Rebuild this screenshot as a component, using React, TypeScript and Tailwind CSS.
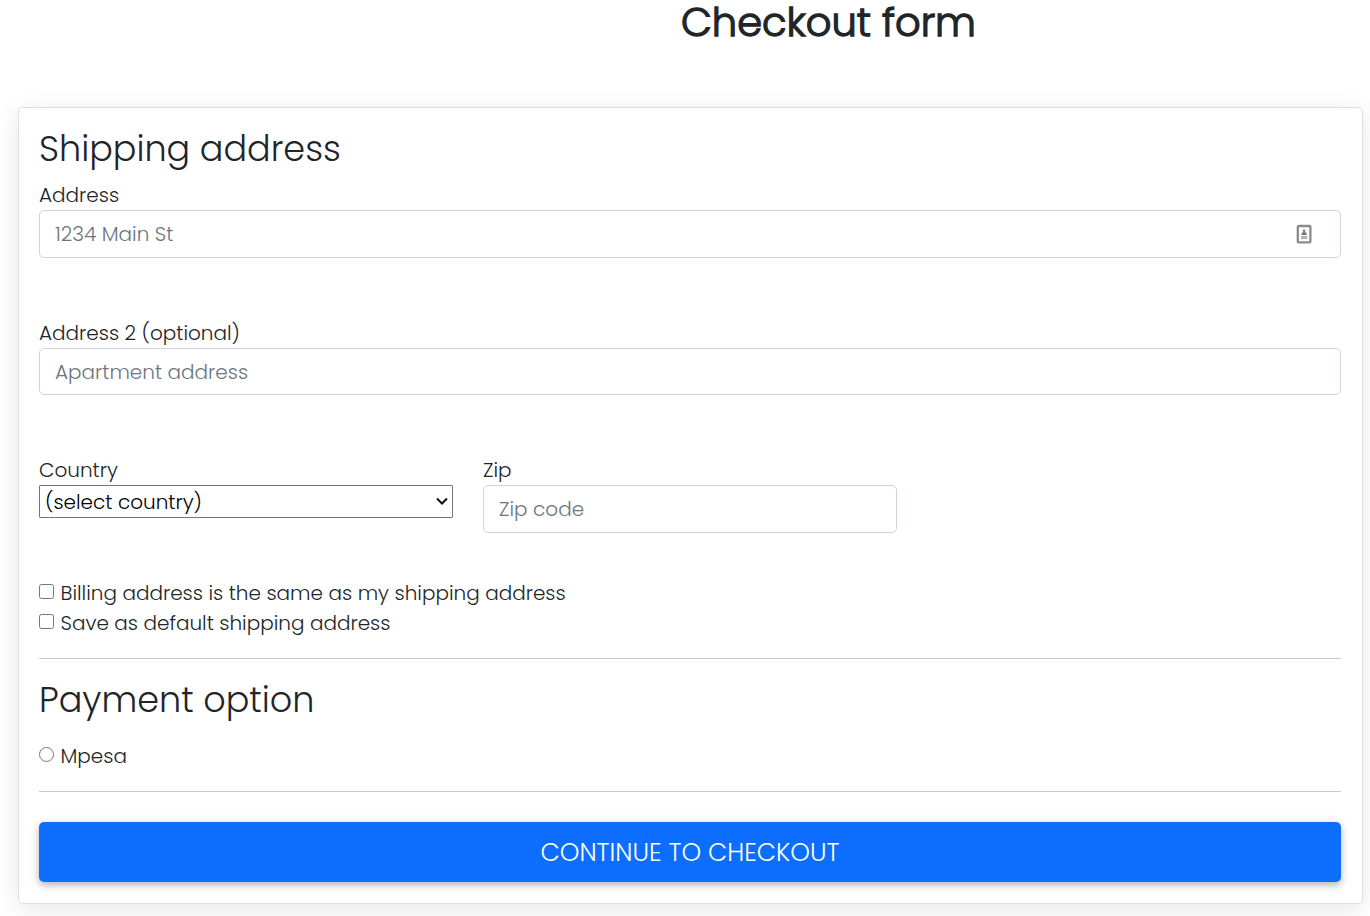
import React from "react";

const inputClass =
  "block h-12 w-full rounded-[5px] border border-[#ced4da] bg-white px-[15px] text-[20px] font-light text-[#495057] outline-none placeholder:text-[#6c757d] placeholder:opacity-100";

const ContactCardIcon = () => (
  <svg className="pointer-events-none absolute right-[29px] top-[14px] h-5 w-4" viewBox="0 0 16 20" fill="none">
    <rect x="1.8" y="2" width="12.6" height="16.4" rx="1" stroke="#8b8b8b" strokeWidth="2.3" />
    <circle cx="8.1" cy="6.8" r="1.3" fill="#777" />
    <path d="M5.4 10.9c0-2.1 1-2.9 2.7-2.9s2.7.8 2.7 2.9z" fill="#777" />
    <path d="M5 12.7h6.2M5 14.4h6.2" stroke="#aaa" strokeWidth="1.4" />
  </svg>
);

export default function App() {
  return (
    <main className="h-[916px] w-[1370px] overflow-hidden bg-white font-['Poppins','Open_Sans',sans-serif] text-[20px] font-light leading-[30px] text-[#212529]">
      <h1 className="h-[107px] whitespace-nowrap pl-[681px] text-[40px] leading-[44px] [-webkit-text-stroke:1.3px_#212529]">Checkout form</h1>
      <form className="ml-[18px] h-[797px] w-[1345px] rounded-[5px] border border-[#dfdfdf] pl-5 pr-[21px] shadow-[0_5px_25px_rgba(0,0,0,0.1)]">
        <h2 className="h-[72px] pt-5 text-[35px] leading-[42px]">Shipping address</h2>
        <label htmlFor="address" className="block">Address</label>
        <div className="relative mb-[60px]">
          <input id="address" className={inputClass} placeholder="1234 Main St" />
          <ContactCardIcon />
        </div>
        <label htmlFor="address2" className="block">Address 2 (optional)</label>
        <input id="address2" className="mb-[60px] block h-[47px] w-full rounded-[5px] border border-[#ced4da] bg-white px-[15px] text-[20px] font-light text-[#495057] outline-none placeholder:text-[#6c757d] placeholder:opacity-100" placeholder="Apartment address" />
        <div className="flex h-[123px] gap-[30px]">
          <div className="w-[414px]">
            <label htmlFor="country" className="block">Country</label>
            <div className="relative">
              <select id="country" className="block h-[33px] w-full appearance-none rounded-[1px] border border-[#767676] bg-white pl-[5px] text-[20px] font-light leading-[30px] text-black">
                <option>(select country)</option>
              </select>
              <svg className="pointer-events-none absolute right-[5px] top-[12px] h-2 w-3" viewBox="0 0 12 8" fill="none">
                <path d="M1 1.5l5 5 5-5" stroke="#101010" strokeWidth="2" />
              </svg>
            </div>
          </div>
          <div className="w-[414px]">
            <label htmlFor="zip" className="block">Zip</label>
            <input id="zip" className={inputClass} placeholder="Zip code" />
          </div>
        </div>
        <label className="flex h-[30px] gap-[6.5px]">
          <input type="checkbox" className="mt-[6px] size-[15px]" />
          <span>Billing address is the same as my shipping address</span>
        </label>
        <label className="flex h-[30px] gap-[6.5px]">
          <input type="checkbox" className="mt-[6px] size-[15px]" />
          <span>Save as default shipping address</span>
        </label>
        <hr className="mt-5 border-[#c8c9ca]" />
        <h2 className="h-[82px] pt-5 text-[35px] leading-[42px]">Payment option</h2>
        <label className="flex h-[30px] gap-[6.5px]">
          <input type="radio" className="mt-[6px] size-[15px]" />
          <span>Mpesa</span>
        </label>
        <hr className="mt-5 border-[#c8c9ca]" />
        <button type="button" className="mt-[30px] flex h-[60px] w-full items-center justify-center rounded-[5px] bg-[#0d6efd] text-[25px] leading-[37px] text-white shadow-[0_3px_6px_rgba(0,0,0,0.2),0_3px_13px_rgba(0,0,0,0.12)]">
          CONTINUE TO CHECKOUT
        </button>
      </form>
    </main>
  );
}
